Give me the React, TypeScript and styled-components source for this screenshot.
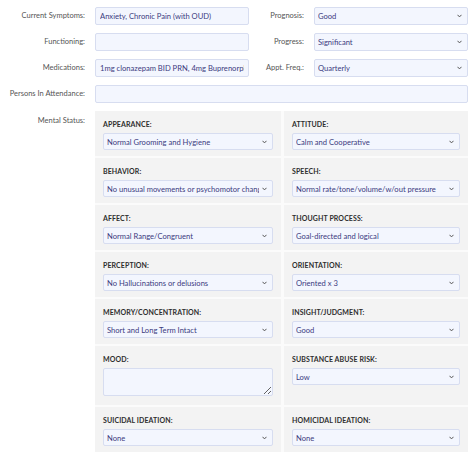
import React from "react";
import styled, { createGlobalStyle } from "styled-components";

const GlobalStyle = createGlobalStyle`
  html, body { margin: 0; padding: 0; background: #ffffff; }
  body { font-family: Lato, "Open Sans", sans-serif; }
  * { box-sizing: border-box; }
`;

const Form = styled.div`
  display: grid;
  grid-template-columns: 85px 154px 45px 154px;
  column-gap: 10px;
  row-gap: 8px;
  padding: 7px 6px 8px 0;
  width: 474px;
`;

const Label = styled.label<{ $top?: boolean }>`
  font-size: 7.5px;
  line-height: 10px;
  color: #555;
  text-align: right;
  align-self: ${(p) => (p.$top ? "start" : "center")};
  padding-top: ${(p) => (p.$top ? "5px" : "0")};
  white-space: nowrap;
`;

const fieldBase = `
  display: block;
  width: 100%;
  height: 18px;
  margin: 0;
  border: 1px solid #d7ddf0;
  border-radius: 2px;
  background: #f3f6fe;
  color: #3b3b7e;
  font-family: Lato, "Open Sans", sans-serif;
  font-size: 7.6px;
  padding: 0 4px;
  outline: none;
`;

const TextInput = styled.input`
  ${fieldBase}
`;

const Wide = styled.div`
  grid-column: 2 / 5;
  display: flex;
`;

const SelectWrap = styled.div`
  position: relative;
  display: flex;
  width: 100%;
`;

const Select = styled.select<{ $h?: number }>`
  ${fieldBase}
  height: ${(p) => p.$h ?? 18}px;
  appearance: none;
  -webkit-appearance: none;
  padding-right: 13px;
  padding-left: 3px;
`;

const Chevron = styled.svg`
  position: absolute;
  right: 6px;
  top: 50%;
  width: 5px;
  height: 4px;
  margin-top: -2px;
  pointer-events: none;
`;

const Panel = styled.div`
  grid-column: 2 / 5;
  display: grid;
  grid-template-columns: 186px 1fr;
  column-gap: 3px;
  row-gap: 2px;
  background: #fbfbfb;
`;

const Cell = styled.div<{ $tall?: boolean }>`
  background: #f3f3f3;
  padding: 9px 8px ${(p) => (p.$tall ? "9px" : "6px")} 8px;
  display: flex;
  flex-direction: column;
  gap: 4px;
`;

const Heading = styled.div`
  font-size: 7px;
  font-weight: 700;
  color: #2e2e2e;
  letter-spacing: 0.1px;
  line-height: 9px;
`;

const Area = styled.textarea`
  ${fieldBase}
  height: 28px;
  resize: vertical;
  padding: 3px 4px;
`;

const ChevronIcon = () => (
  <Chevron viewBox="0 0 5 4">
    <path d="M0.5 0.8 L2.5 2.9 L4.5 0.8" fill="none" stroke="#555" strokeWidth="1" />
  </Chevron>
);

const Dropdown = ({ value, h }: { value: string; h?: number }) => (
  <SelectWrap>
    <Select defaultValue={value} $h={h}>
      <option>{value}</option>
    </Select>
    <ChevronIcon />
  </SelectWrap>
);

type Item = { title: string; value?: string; area?: boolean; tall?: boolean };

const items: Item[] = [
  { title: "APPEARANCE:", value: "Normal Grooming and Hygiene" },
  { title: "ATTITUDE:", value: "Calm and Cooperative" },
  { title: "BEHAVIOR:", value: "No unusual movements or psychomotor changes" },
  { title: "SPEECH:", value: "Normal rate/tone/volume/w/out pressure" },
  { title: "AFFECT:", value: "Normal Range/Congruent" },
  { title: "THOUGHT PROCESS:", value: "Goal-directed and logical" },
  { title: "PERCEPTION:", value: "No Hallucinations or delusions" },
  { title: "ORIENTATION:", value: "Oriented x 3" },
  { title: "MEMORY/CONCENTRATION:", value: "Short and Long Term Intact" },
  { title: "INSIGHT/JUDGMENT:", value: "Good" },
  { title: "MOOD:", area: true, tall: true },
  { title: "SUBSTANCE ABUSE RISK:", value: "Low" },
  { title: "SUICIDAL IDEATION:", value: "None" },
  { title: "HOMICIDAL IDEATION:", value: "None" },
];

export default function App() {
  return (
    <>
      <GlobalStyle />
      <Form>
        <Label>Current Symptoms:</Label>
        <TextInput readOnly value="Anxiety, Chronic Pain (with OUD)" />
        <Label>Prognosis:</Label>
        <Dropdown value="Good" />

        <Label>Functioning:</Label>
        <TextInput readOnly value="" />
        <Label>Progress:</Label>
        <Dropdown value="Significant" />

        <Label>Medications:</Label>
        <TextInput readOnly value="1mg clonazepam BID PRN, 4mg Buprenorphine" />
        <Label>Appt. Freq.:</Label>
        <Dropdown value="Quarterly" />

        <Label>Persons In Attendance:</Label>
        <Wide>
          <TextInput readOnly value="" />
        </Wide>

        <Label $top>Mental Status:</Label>
        <Panel>
          {items.map((it) => (
            <Cell key={it.title} $tall={it.tall}>
              <Heading>{it.title}</Heading>
              {it.area ? <Area readOnly /> : <Dropdown value={it.value!} h={17} />}
            </Cell>
          ))}
        </Panel>
      </Form>
    </>
  );
}
